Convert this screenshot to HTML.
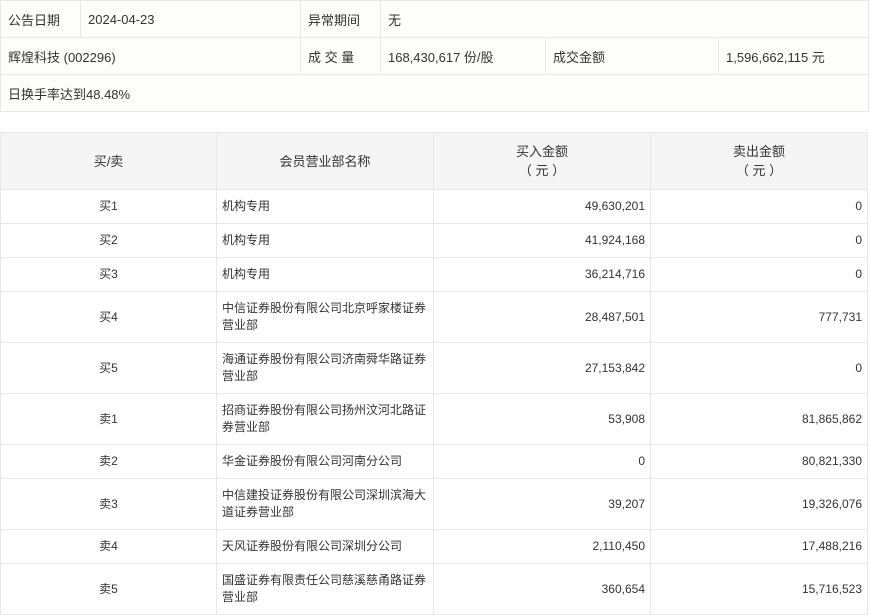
<!DOCTYPE html>
<html><head><meta charset="utf-8"><style>
body{margin:0;background:#fff;font-family:"Liberation Sans","Noto Sans CJK SC",sans-serif;color:#333;}
.a,.b{position:absolute;left:0;border-collapse:collapse;table-layout:fixed;}
.a{top:0;width:868px;background:#fdfdfa;font-size:13px;}
.a td{border:1px solid #e8e8e8;height:37px;padding:0 0 0 7px;box-sizing:border-box;white-space:nowrap;}
.b{top:132px;width:867px;font-size:12px;}
.b td{border:1px solid #e8e8e8;padding:0 5px;box-sizing:border-box;line-height:17px;}
.b thead td{background:#f5f5f5;text-align:center;height:57px;font-size:13px;line-height:19px;}
.c{text-align:center}.r{text-align:right}
</style></head><body>
<table class="a">
<colgroup><col style="width:80px"><col style="width:220px"><col style="width:80px"><col style="width:165px"><col style="width:173px"><col style="width:150px"></colgroup>
<tr><td>公告日期</td><td>2024-04-23</td><td>异常期间</td><td colspan="3">无</td></tr>
<tr><td colspan="2">辉煌科技 (002296)</td><td>成 交 量</td><td>168,430,617 份/股</td><td>成交金额</td><td>1,596,662,115 元</td></tr>
<tr><td colspan="6">日换手率达到48.48%</td></tr>
</table>
<table class="b">
<colgroup><col style="width:216px"><col style="width:217px"><col style="width:217px"><col style="width:217px"></colgroup>
<thead><tr><td>买/卖</td><td>会员营业部名称</td><td>买入金额<br>（ 元 ）</td><td>卖出金额<br>（ 元 ）</td></tr></thead>
<tbody>
<tr style="height:34px"><td class="c">买1</td><td>机构专用</td><td class="r">49,630,201</td><td class="r">0</td></tr>
<tr style="height:34px"><td class="c">买2</td><td>机构专用</td><td class="r">41,924,168</td><td class="r">0</td></tr>
<tr style="height:34px"><td class="c">买3</td><td>机构专用</td><td class="r">36,214,716</td><td class="r">0</td></tr>
<tr style="height:51px"><td class="c">买4</td><td>中信证券股份有限公司北京呼家楼证券营业部</td><td class="r">28,487,501</td><td class="r">777,731</td></tr>
<tr style="height:51px"><td class="c">买5</td><td>海通证券股份有限公司济南舜华路证券营业部</td><td class="r">27,153,842</td><td class="r">0</td></tr>
<tr style="height:51px"><td class="c">卖1</td><td>招商证券股份有限公司扬州汶河北路证券营业部</td><td class="r">53,908</td><td class="r">81,865,862</td></tr>
<tr style="height:34px"><td class="c">卖2</td><td>华金证券股份有限公司河南分公司</td><td class="r">0</td><td class="r">80,821,330</td></tr>
<tr style="height:51px"><td class="c">卖3</td><td>中信建投证券股份有限公司深圳滨海大道证券营业部</td><td class="r">39,207</td><td class="r">19,326,076</td></tr>
<tr style="height:34px"><td class="c">卖4</td><td>天风证券股份有限公司深圳分公司</td><td class="r">2,110,450</td><td class="r">17,488,216</td></tr>
<tr style="height:51px"><td class="c">卖5</td><td>国盛证券有限责任公司慈溪慈甬路证券营业部</td><td class="r">360,654</td><td class="r">15,716,523</td></tr>
</tbody></table>
</body></html>
